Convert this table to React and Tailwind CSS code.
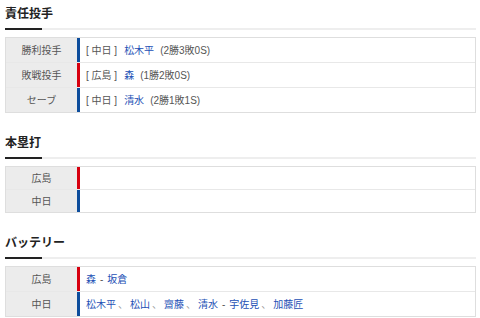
import React from 'react';

const font = { fontFamily: '"Liberation Sans", "Noto Sans CJK JP", sans-serif' };

const barColor = (team) => (team === '広島' ? 'bg-[#d7000f]' : 'bg-[#0d4d9c]');

const Heading = ({ title }) => (
  <div>
    <h2 className="text-[12px] leading-[20px] font-bold text-[#222] pb-[4px]">{title}</h2>
    <div className="flex h-[2px]">
      <div className="w-[37px] bg-[#222]" />
      <div className="flex-1 bg-[#eeeeee]" />
    </div>
  </div>
);

const Row = ({ label, team, children, tall = true }) => (
  <div className="flex border-b border-[#e8e8e8] last:border-b-0">
    <div className={`w-[71px] bg-[#ececec] flex items-center justify-center text-[#555] ${tall ? 'h-[24px]' : 'h-[22px]'}`}>
      {label}
    </div>
    <div className={`w-[3px] ${barColor(team)}`} />
    <div className="flex-1 flex items-center pl-[6px] text-[#555]">{children}</div>
  </div>
);

const Link = ({ children }) => <span className="text-[#2350b5]">{children}</span>;

const Sep = () => <span className="text-[#999] mx-[2px]">、</span>;

const Dash = () => <span className="mx-[4px]">-</span>;

const Pitcher = ({ team, name, record }) => (
  <>
    <span>[ {team} ]</span>
    <span className="ml-[7px]"><Link>{name}</Link></span>
    <span className="ml-[6px]">({record})</span>
  </>
);

const Table = ({ children }) => (
  <div className="mt-[7px] border border-[#dedede] text-[10px]">{children}</div>
);

export default function App() {
  return (
    <div className="w-[480px] h-[318px] bg-white overflow-hidden pl-[5px] pr-[4px] pt-[4px]" style={font}>
      <section>
        <Heading title="責任投手" />
        <Table>
          <Row label="勝利投手" team="中日">
            <Pitcher team="中日" name="松木平" record="2勝3敗0S" />
          </Row>
          <Row label="敗戦投手" team="広島">
            <Pitcher team="広島" name="森" record="1勝2敗0S" />
          </Row>
          <Row label="セーブ" team="中日">
            <Pitcher team="中日" name="清水" record="2勝1敗1S" />
          </Row>
        </Table>
      </section>

      <section className="mt-[20px]">
        <Heading title="本塁打" />
        <Table>
          <Row label="広島" team="広島" tall={false} />
          <Row label="中日" team="中日" tall={false} />
        </Table>
      </section>

      <section className="mt-[20px]">
        <Heading title="バッテリー" />
        <Table>
          <Row label="広島" team="広島">
            <Link>森</Link>
            <Dash />
            <Link>坂倉</Link>
          </Row>
          <Row label="中日" team="中日">
            <Link>松木平</Link>
            <Sep />
            <Link>松山</Link>
            <Sep />
            <Link>齋藤</Link>
            <Sep />
            <Link>清水</Link>
            <Dash />
            <Link>宇佐見</Link>
            <Sep />
            <Link>加藤匠</Link>
          </Row>
        </Table>
      </section>
    </div>
  );
}
